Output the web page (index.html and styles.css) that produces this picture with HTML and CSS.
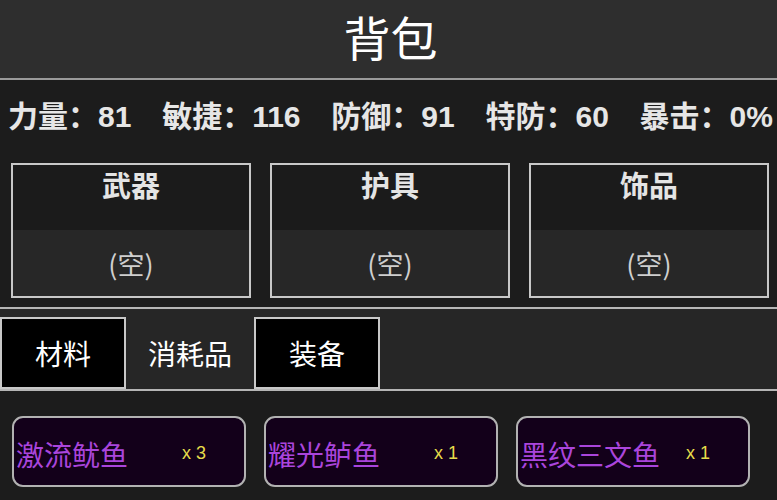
FILE: index.html
```html
<!DOCTYPE html>
<html lang="zh-CN">
<head>
<meta charset="utf-8">
<title>背包</title>
<link rel="stylesheet" href="styles.css">
</head>
<body>
<header class="header"><h1 class="title">背包</h1></header>
<section class="stats">
  <span class="stat">力量：81</span>
  <span class="stat">敏捷：116</span>
  <span class="stat">防御：91</span>
  <span class="stat">特防：60</span>
  <span class="stat">暴击：0%</span>
</section>
<section class="equip">
  <div class="slot"><div class="slot-name">武器</div><div class="slot-value">(空)</div></div>
  <div class="slot"><div class="slot-name">护具</div><div class="slot-value">(空)</div></div>
  <div class="slot"><div class="slot-name">饰品</div><div class="slot-value">(空)</div></div>
</section>
<nav class="tabs">
  <div class="tab tab-boxed">材料</div>
  <div class="tab">消耗品</div>
  <div class="tab tab-boxed">装备</div>
</nav>
<section class="items">
  <div class="item"><span class="item-name">激流鱿鱼</span><span class="item-count">x 3</span></div>
  <div class="item"><span class="item-name">耀光鲈鱼</span><span class="item-count">x 1</span></div>
  <div class="item"><span class="item-name">黑纹三文鱼</span><span class="item-count">x 1</span></div>
</section>
</body>
</html>
```
FILE: styles.css
```css
* { box-sizing: border-box; }
html, body { margin: 0; padding: 0; }
body {
  width: 777px;
  height: 500px;
  overflow: hidden;
  background: #1c1c1c;
  color: #e8e8e8;
  font-family: "Liberation Sans", "Noto Sans CJK SC", sans-serif;
}
.header {
  height: 80px;
  background: #2e2e2e;
  border-bottom: 2px solid #9a9a9a;
  display: flex;
  align-items: center;
  justify-content: center;
}
.title {
  margin: 0;
  font-family: "Noto Sans CJK SC", sans-serif;
  font-weight: 400;
  font-size: 47px;
  line-height: 1;
  color: #ffffff;
  padding-bottom: 8px;
  padding-left: 4px;
}
.stats {
  display: flex;
  justify-content: space-between;
  padding: 20px 4px 0 8px;
  height: 54px;
  font-size: 30px;
  line-height: 34px;
  font-weight: 700;
  color: #e6e6e6;
  white-space: nowrap;
}
.equip {
  display: flex;
  gap: 19px;
  padding: 29px 8px 9px 11px;
}
.slot {
  width: 240px;
  height: 135px;
  border: 2px solid #c8c8c8;
  display: flex;
  flex-direction: column;
}
.slot-name {
  height: 65px;
  background: #1b1b1b;
  display: flex;
  justify-content: center;
  align-items: center;
  padding-bottom: 28px;
  font-family: "Noto Sans CJK SC", sans-serif;
  font-size: 29px;
  font-weight: 700;
  color: #e4e4e4;
}
.slot-value {
  flex: 1;
  background: #272727;
  display: flex;
  justify-content: center;
  align-items: center;
  padding-top: 0;
  font-family: "Noto Sans CJK SC", sans-serif;
  font-size: 27px;
  color: #cfcfcf;
}
.tabs {
  display: flex;
  background: #262626;
  border-top: 2px solid #b5b5b5;
  border-bottom: 2px solid #b5b5b5;
  padding-top: 8px;
}
.tab {
  width: 128px;
  height: 72px;
  display: flex;
  justify-content: center;
  align-items: center;
  font-family: "Noto Sans CJK SC", sans-serif;
  font-size: 28px;
  color: #ffffff;
}
.tab-boxed {
  width: 126px;
  background: #000000;
  border: 2px solid #c8c8c8;
}
.items {
  display: flex;
  gap: 18px;
  padding: 25px 8px 0 12px;
}
.item {
  width: 234px;
  height: 71px;
  border: 2px solid #b2b2b2;
  border-radius: 11px;
  background: #13001a;
  display: flex;
  justify-content: space-between;
  align-items: center;
  padding: 4px 38px 0 2px;
}
.item-name {
  font-family: "Noto Sans CJK SC", sans-serif;
  font-size: 28px;
  color: #aa45dc;
  white-space: nowrap;
}
.item-count {
  font-size: 18px;
  color: #e6dc4a;
  white-space: nowrap;
}
```
